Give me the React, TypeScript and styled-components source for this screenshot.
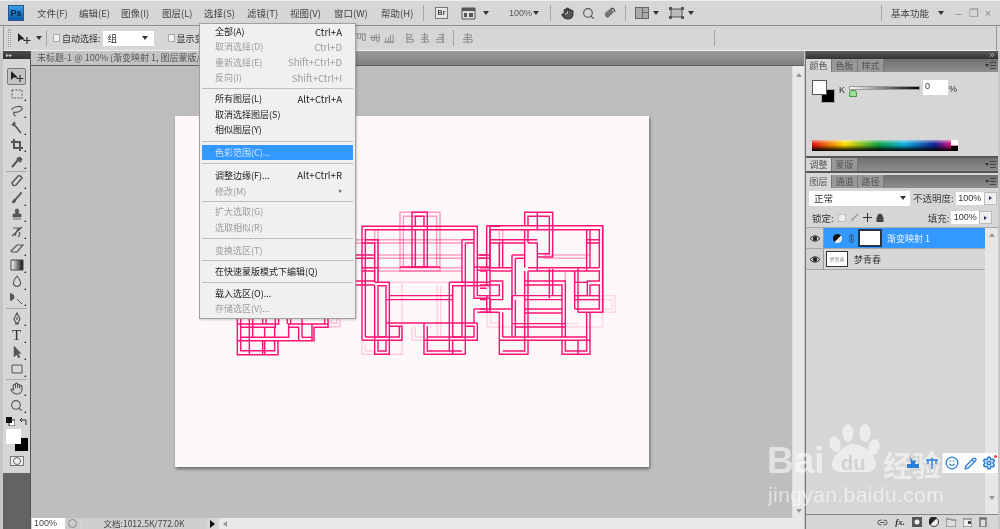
import React from 'react';
import styled, { createGlobalStyle } from 'styled-components';
import { Search, Smile, Pencil, Settings, Hand, Link2, ChevronsRight } from 'lucide-react';

const Global = createGlobalStyle`
  html, body { margin: 0; padding: 0; background: #d6d6d6; overflow: hidden; }
  * { box-sizing: border-box; }
`;

const Root = styled.div`
  position: relative;
  width: 1000px;
  height: 529px;
  overflow: hidden;
  background: #d6d6d6;
  display: flex;
  flex-direction: column;
  font-family: "Noto Sans CJK SC", "Liberation Sans", sans-serif;
  font-size: 9.5px;
  color: #333;
  filter: blur(0.35px);
`;

const MenuBar = styled.div`
  height: 26px;
  flex: none;
  display: flex;
  align-items: center;
  padding-left: 8px;
  border-top: 1px solid #eee;
  border-bottom: 1px solid #8e8e8e;
`;
const Logo = styled.div`
  width: 16px;
  height: 16px;
  margin-right: 13px;
  background: linear-gradient(#3aa0e8, #0a5aa8);
  border: 1px solid #27578a;
  color: #06223f;
  font: bold 9px/14px "Liberation Sans", sans-serif;
  text-align: center;
`;
const MenuItem = styled.span<{ $w: number }>`
  width: ${p => p.$w}px;
  flex: none;
  color: #444;
  white-space: nowrap;
`;
const VSep = styled.i<{ $ml: number; $mr: number }>`
  display: block;
  flex: none;
  width: 1px;
  height: 16px;
  background: #a8a8a8;
  margin: 0 ${p => p.$mr}px 0 ${p => p.$ml}px;
`;
const Caret = styled.i<{ $ml?: number; $mr?: number }>`
  display: block;
  flex: none;
  width: 0;
  height: 0;
  border: 3px solid transparent;
  border-top: 4px solid #333;
  border-bottom: 0;
  margin: 0 ${p => p.$mr ?? 0}px 0 ${p => p.$ml ?? 0}px;
`;
const BarIcon = styled.svg<{ $ml?: number }>`
  flex: none;
  margin-left: ${p => p.$ml ?? 0}px;
  color: #555;
`;
const BrBox = styled.div`
  width: 13px;
  height: 12px;
  border: 1px solid #777;
  background: #e6e6e6;
  color: #444;
  font: bold 7px/10px "Liberation Sans", sans-serif;
  text-align: center;
  flex: none;
`;
const Zoomed = styled.span`
  margin-left: 20px;
  width: 23px;
  flex: none;
  font: 9px "Liberation Sans", sans-serif;
  color: #555;
`;
const Spring = styled.div`
  flex: 1;
`;
const WinGlyph = styled.span<{ $w: number }>`
  width: ${p => p.$w}px;
  color: #8a8a8a;
  font: 11px "Liberation Sans", sans-serif;
  flex: none;
  text-align: center;
`;

const OptionsBar = styled.div`
  height: 25px;
  flex: none;
  display: flex;
  align-items: center;
  margin: 0 3px;
  padding-left: 4px;
  border-bottom: 1px solid #f0f0f0;
  border-left: 1px solid #999;
  border-right: 1px solid #999;
`;
const Grip = styled.div`
  width: 3px;
  height: 18px;
  flex: none;
  border-left: 1px dotted #999;
  border-right: 1px dotted #999;
  margin-right: 5px;
`;
const CheckBox = styled.i<{ $ml: number }>`
  display: block;
  flex: none;
  width: 7px;
  height: 8px;
  background: #f2f2f2;
  border: 1px solid #aaa;
  margin-left: ${p => p.$ml}px;
  margin-right: 2px;
`;
const OptLabel = styled.span`
  font-size: 9px;
  white-space: nowrap;
  flex: none;
`;
const OptClipped = styled(OptLabel)`
  width: 23px;
  overflow: hidden;
`;
const OptSelect = styled.div`
  width: 51px;
  height: 15px;
  margin-left: 2px;
  flex: none;
  background: #fff;
  display: flex;
  align-items: center;
  justify-content: space-between;
  padding: 0 6px 0 5px;
`;
const AlignGroup = styled.div<{ $ml: number }>`
  display: flex;
  gap: 2px;
  margin-left: ${p => p.$ml}px;
  flex: none;
`;
const AlignIcon = styled.svg`
  color: #8a8a8a;
`;

const Workspace = styled.div`
  flex: 1;
  min-height: 0;
  display: flex;
  padding: 0 3px;
  background: #c6c6c6;
`;
const Toolbox = styled.div`
  width: 28px;
  flex: none;
  background: #636363;
  border-right: 1px solid #555;
  display: flex;
  flex-direction: column;
`;
const ToolHead = styled.div`
  height: 8px;
  background: linear-gradient(#4c4c4c, #333);
  flex: none;
  color: #ccc;
  font-size: 6px;
  line-height: 8px;
  padding-left: 3px;
`;
const ToolBody = styled.div`
  height: 414px;
  flex: none;
  background: #d6d6d6;
  display: flex;
  flex-direction: column;
  align-items: center;
  padding-top: 9px;
`;
const ToolRow = styled.div<{ $sel?: boolean; $h?: number }>`
  position: relative;
  width: 19px;
  height: ${p => p.$h ?? 16.8}px;
  flex: none;
  display: flex;
  align-items: center;
  justify-content: center;
  color: #555;
  border: 1px solid ${p => (p.$sel ? '#777' : 'transparent')};
  border-radius: 2px;
  background: ${p => (p.$sel ? '#c4c4c4' : 'transparent')};
  &::after {
    content: '';
    position: absolute;
    right: -1px;
    bottom: 0;
    border: 1.5px solid transparent;
    border-right-color: #222;
    border-bottom-color: #222;
    display: ${p => (p.$sel ? 'none' : 'block')};
  }
`;
const ToolLetter = styled.span`
  font: 15px/15px "Liberation Serif", serif;
  color: #333;
`;
const ToolSep = styled.div`
  width: 21px;
  height: 1px;
  flex: none;
  background: #aaa;
  margin: 1px 0;
`;
const MiniColors = styled.div`
  width: 22px;
  height: 9px;
  margin-top: 3px;
  flex: none;
  display: flex;
  justify-content: space-between;
  align-items: center;
`;
const Swatches = styled.div`
  position: relative;
  width: 22px;
  height: 22px;
  margin-top: 3px;
  flex: none;
`;
const FgSwatch = styled.div`
  position: absolute;
  left: 0;
  top: 0;
  width: 15px;
  height: 15px;
  background: #fff;
  z-index: 1;
`;
const BgSwatch = styled.div`
  position: absolute;
  right: 0;
  bottom: 0;
  width: 13px;
  height: 13px;
  background: #000;
`;
const MaskBtn = styled.div`
  width: 14px;
  height: 10px;
  margin-top: 5px;
  background: #eee;
  border: 1px solid #777;
  display: flex;
  align-items: center;
  justify-content: center;
  flex: none;
  &::after {
    content: '';
    width: 6px;
    height: 6px;
    border-radius: 50%;
    border: 1px solid #666;
  }
`;

const DocColumn = styled.div`
  width: 773px;
  flex: none;
  display: flex;
  flex-direction: column;
`;
const TabBar = styled.div`
  height: 15px;
  flex: none;
  background: linear-gradient(#9a9a9a, #7f7f7f);
  border-bottom: 1px solid #5f5f5f;
`;
const DocTab = styled.div`
  width: 168px;
  height: 14px;
  background: #c4c4c4;
  color: #555;
  font-size: 9px;
  line-height: 13px;
  padding-left: 6px;
  white-space: nowrap;
  overflow: hidden;
`;
const DocMain = styled.div`
  flex: 1;
  min-height: 0;
  display: flex;
`;
const DocView = styled.div`
  flex: 1;
  background: #bebebe;
  padding: 50px 0 0 144px;
`;
const CanvasSheet = styled.div`
  width: 474px;
  height: 351px;
  background: #fff8f8;
  box-shadow: 1px 2px 3px rgba(0, 0, 0, .45);
`;
const Art = styled.svg`
  display: block;
`;
const VScroll = styled.div`
  width: 12px;
  flex: none;
  background: #e8e8e8;
  border-left: 1px solid #ddd;
  display: flex;
  flex-direction: column;
  justify-content: space-between;
  align-items: center;
  padding: 7px 0 5px;
`;
const ArrowUp = styled.i`
  border: 3px solid transparent;
  border-bottom: 4px solid #999;
  border-top: 0;
`;
const ArrowDown = styled.i`
  border: 3px solid transparent;
  border-top: 4px solid #999;
  border-bottom: 0;
`;
const StatusBar = styled.div`
  height: 11px;
  flex: none;
  display: flex;
  align-items: stretch;
  background: #d6d6d6;
  font-size: 9px;
  line-height: 11px;
`;
const ZoomBox = styled.div`
  width: 33px;
  margin-left: 1px;
  background: #fff;
  padding-left: 2px;
  font-family: "Liberation Sans", sans-serif;
  color: #444;
`;
const ClockBtn = styled.div`
  width: 15px;
  background: #ccc;
  display: flex;
  align-items: center;
  justify-content: center;
  &::after {
    content: '';
    width: 7px;
    height: 7px;
    border-radius: 50%;
    border: 1px solid #888;
  }
`;
const DocInfo = styled.div`
  width: 124px;
  margin-left: 2px;
  background: #cfcfcf;
  text-align: center;
  color: #444;
  white-space: nowrap;
  font-size: 8.5px;
`;
const PlayBtn = styled.div`
  width: 9px;
  margin-left: 2px;
  display: flex;
  align-items: center;
  justify-content: center;
  &::after {
    content: '';
    border: 4px solid transparent;
    border-left: 5px solid #111;
    border-right: 0;
  }
`;
const HScroll = styled.div`
  flex: 1;
  margin-left: 2px;
  background: #e8e8e8;
  display: flex;
  align-items: center;
  padding-left: 4px;
  &::before {
    content: '';
    border: 3px solid transparent;
    border-right: 4px solid #999;
    border-left: 0;
  }
`;

const Panels = styled.div`
  width: 193px;
  margin-left: 1px;
  flex: none;
  background: #d6d6d6;
  border-left: 1px solid #777;
  display: flex;
  flex-direction: column;
`;
const PanelHead = styled.div`
  height: 8px;
  flex: none;
  background: linear-gradient(#5a5a5a, #333);
  display: flex;
  justify-content: flex-end;
  color: #ddd;
  padding-right: 2px;
`;
const TabStrip = styled.div<{ $mt?: number }>`
  height: 13px;
  flex: none;
  margin-top: ${p => p.$mt ?? 0}px;
  background: linear-gradient(#707070, #8e8e8e);
  display: flex;
  align-items: stretch;
  position: relative;
`;
const PanelTab = styled.div<{ $on?: boolean }>`
  width: 26px;
  text-align: center;
  font-size: 9px;
  line-height: 13px;
  background: ${p => (p.$on ? '#d6d6d6' : '#999')};
  color: #555;
  border-right: 1px solid #777;
`;
const TabMenu = styled.div`
  margin-left: auto;
  margin-right: 2px;
  align-self: center;
  display: flex;
  align-items: center;
  gap: 1px;
  &::before {
    content: '';
    border: 2px solid transparent;
    border-top: 3px solid #333;
    border-bottom: 0;
  }
  &::after {
    content: '';
    width: 6px;
    height: 5px;
    border-top: 1px solid #444;
    border-bottom: 1px solid #444;
    background: linear-gradient(transparent 40%, #444 40%, #444 60%, transparent 60%);
  }
`;
const ColorBody = styled.div`
  height: 86px;
  flex: none;
  position: relative;
  border-bottom: 2px solid #555;
  padding: 8px 0 0 6px;
`;
const ColorTop = styled.div`
  display: flex;
  align-items: flex-start;
`;
const ColorSwatches = styled.div`
  position: relative;
  width: 23px;
  height: 23px;
  flex: none;
`;
const PanelFg = styled.div`
  position: absolute;
  left: 0;
  top: 0;
  width: 15px;
  height: 15px;
  background: #fff;
  border: 1px solid #555;
  z-index: 1;
`;
const PanelBg = styled.div`
  position: absolute;
  right: 0;
  bottom: 0;
  width: 14px;
  height: 14px;
  background: #000;
  border: 1px solid #aaa;
`;
const KLabel = styled.span`
  font: 9px/12px "Liberation Sans", sans-serif;
  color: #333;
  margin: 4px 0 0 4px;
  width: 10px;
  flex: none;
`;
const Slider = styled.div`
  position: relative;
  width: 71px;
  height: 4px;
  margin-top: 6px;
  flex: none;
  background: linear-gradient(to right, #fff, #000);
  border: 1px solid #999;
  &::after {
    content: '';
    position: absolute;
    left: -1px;
    top: 3px;
    width: 6px;
    height: 5px;
    background: #9fdc9f;
    border: 1px solid #3d9a3d;
    border-radius: 3px 3px 0 0;
  }
`;
const NumBox = styled.div`
  width: 25px;
  height: 15px;
  margin-left: 3px;
  flex: none;
  background: #fff;
  padding-left: 2px;
  font: 9px/12px "Liberation Sans", sans-serif;
`;
const Pct = styled.span`
  font: 9px/15px "Liberation Sans", sans-serif;
  margin: 2px 0 0 1px;
`;
const Ramp = styled.div`
  position: absolute;
  left: 6px;
  top: 68px;
  width: 146px;
  height: 11px;
  background:
    linear-gradient(to right, transparent 139px, #fff 139px) top / 100% 50% no-repeat,
    linear-gradient(to right, transparent 139px, #000 139px) bottom / 100% 50% no-repeat,
    linear-gradient(to bottom, rgba(255,255,255,.55), rgba(255,255,255,0) 35%, rgba(0,0,0,0) 45%, #000 100%),
    linear-gradient(to right, #e01010 0, #ffe000 33px, #10a040 66px, #10b0e0 92px, #102090 123px, #e01080 139px, #e01010 146px);
`;
const AdjGap = styled.div`
  height: 2px;
  flex: none;
  background: #555;
`;
const BlendRow = styled.div`
  height: 20px;
  flex: none;
  display: flex;
  align-items: center;
  padding-left: 3px;
`;
const BlendSelect = styled.div`
  width: 101px;
  height: 15px;
  background: #fff;
  display: flex;
  align-items: center;
  justify-content: space-between;
  padding: 0 4px 0 5px;
  flex: none;
  color: #333;
`;
const FieldLabel = styled.span<{ $ml: number }>`
  margin-left: ${p => p.$ml}px;
  color: #444;
  white-space: nowrap;
  flex: none;
`;
const FieldBox = styled.div`
  width: 28px;
  height: 13px;
  margin-left: 2px;
  background: #fff;
  flex: none;
  font: 9px/13px "Liberation Sans", sans-serif;
  text-align: center;
`;
const Stepper = styled.div`
  width: 13px;
  height: 13px;
  flex: none;
  background: #eee;
  border: 1px solid #bbb;
  color: #2860a8;
  display: flex;
  align-items: center;
  justify-content: center;
  &::after {
    content: '';
    border: 2px solid transparent;
    border-left: 3px solid #335;
    border-right: 0;
  }
`;
const LockRow = styled.div`
  height: 20px;
  flex: none;
  display: flex;
  align-items: center;
  padding-left: 6px;
  border-bottom: 1px solid #aaa;
`;
const LockIcons = styled.div`
  display: flex;
  gap: 4px;
  margin-left: 4px;
  width: 60px;
  flex: none;
  align-items: center;
`;
const LayersWrap = styled.div`
  flex: 1;
  min-height: 0;
  display: flex;
`;
const LayerList = styled.div`
  flex: 1;
  display: flex;
  flex-direction: column;
`;
const LayerRow = styled.div`
  height: 21px;
  flex: none;
  display: flex;
  align-items: center;
  border-bottom: 1px solid #a8a8a8;
`;
const EyeCell = styled.div`
  width: 18px;
  height: 100%;
  flex: none;
  background: #d0d0d0;
  border-right: 1px solid #999;
  display: flex;
  align-items: center;
  justify-content: center;
`;
const LayerBody = styled.div<{ $on?: boolean }>`
  flex: 1;
  height: 100%;
  display: flex;
  align-items: center;
  background: ${p => (p.$on ? '#3399ff' : 'transparent')};
  color: ${p => (p.$on ? '#eaf4ff' : '#333')};
`;
const AdjDot = styled.div`
  width: 9px;
  height: 9px;
  border-radius: 50%;
  background: linear-gradient(135deg, #111 50%, #eee 50%);
  margin-left: 9px;
  flex: none;
`;
const LinkWrap = styled.span`
  display: flex;
  margin-left: 5px;
  transform: rotate(90deg);
  color: #333;
`;
const Thumb = styled.div<{ $ml: number; $dark?: boolean }>`
  width: 22px;
  height: 16px;
  margin-left: ${p => p.$ml}px;
  flex: none;
  background: #fff;
  border: 1px solid #333;
  outline: ${p => (p.$dark ? '1px solid #1a3a5c' : 'none')};
  color: #888;
  font-size: 5px;
  line-height: 14px;
  text-align: center;
  overflow: hidden;
  white-space: nowrap;
`;
const LayerName = styled.span`
  margin-left: 6px;
  font-size: 9px;
  white-space: nowrap;
`;
const LayerScroll = styled.div`
  width: 13px;
  flex: none;
  background: #e6e6e6;
  display: flex;
  flex-direction: column;
  justify-content: space-between;
  align-items: center;
  padding: 5px 0 14px;
`;
const LayerFoot = styled.div`
  height: 15px;
  flex: none;
  border-top: 1px solid #888;
  display: flex;
  align-items: center;
  justify-content: flex-end;
  gap: 7px;
  padding-right: 11px;
  color: #444;
`;
const FxMark = styled.span`
  font: italic bold 9px "Liberation Serif", serif;
  color: #333;
`;

const MenuPanel = styled.div`
  position: absolute;
  left: 199px;
  top: 23px;
  width: 157px;
  height: 296px;
  background: #f0f0f0;
  border: 1px solid #a0a0a0;
  box-shadow: 1px 1px 2px rgba(0,0,0,.2);
  padding: 0 2px;
  z-index: 5;
`;
const DDRow = styled.div<{ $h: number; $off?: boolean; $hot?: boolean }>`
  height: ${p => p.$h}px;
  display: flex;
  align-items: center;
  justify-content: space-between;
  padding: 0 11px 0 13px;
  font-size: 9px;
  color: ${p => (p.$hot ? '#cfe6ff' : p.$off ? '#9c9c9c' : '#222')};
  background: ${p => (p.$hot ? '#3399ff' : 'transparent')};
  white-space: nowrap;
  position: relative;
`;
const Shortcut = styled.span`
  font-size: 9.6px;
`;
const DDSep = styled.div<{ $h: number }>`
  height: ${p => p.$h}px;
  display: flex;
  align-items: center;
  &::after {
    content: '';
    display: block;
    width: 100%;
    height: 1px;
    background: #bdbdbd;
  }
`;
const SubArrow = styled.i`
  border: 2.5px solid transparent;
  border-left: 3px solid #777;
  border-right: 0;
`;

const Watermark = styled.div`
  position: absolute;
  left: 766px;
  top: 420px;
  width: 190px;
  height: 90px;
  color: rgba(255, 255, 255, .55);
  z-index: 3;
`;
const WmBai = styled.span`
  position: absolute;
  left: 1px;
  top: 21px;
  font: bold 37px/40px "Liberation Sans", sans-serif;
`;
const WmDu = styled.span`
  position: absolute;
  left: 75px;
  top: 31px;
  font: bold 20px/24px "Liberation Sans", sans-serif;
  color: #d0d0d0;
`;
const WmCn = styled.span`
  position: absolute;
  left: 117px;
  top: 24px;
  font: bold 29px/40px "Noto Sans CJK SC", sans-serif;
  white-space: nowrap;
`;
const WmUrl = styled.span`
  position: absolute;
  left: 2px;
  top: 61px;
  font: 21px/28px "Liberation Sans", sans-serif;
  letter-spacing: 0.4px;
  white-space: nowrap;
`;
const WmPaw = styled.svg`
  position: absolute;
  left: 60px;
  top: 0;
`;
const FloatBar = styled.div`
  position: absolute;
  left: 906px;
  top: 453px;
  width: 92px;
  height: 20px;
  background: linear-gradient(to right, transparent 36px, rgba(255,255,255,.95) 37px);
  display: flex;
  align-items: center;
  justify-content: space-between;
  padding: 0 2px 0 0;
  color: #2a7fd6;
  z-index: 6;
`;
const FloatGear = styled.div`
  position: relative;
  display: flex;
  &::after {
    content: '';
    position: absolute;
    right: -1px;
    top: -1px;
    width: 3px;
    height: 3px;
    border-radius: 50%;
    background: #f33;
  }
`;

/* art: each group is in 3x-zoomed coordinates of its own crop */
const strong1 = [
  'M36 406V64H382V196H420', 'M46 396V74H372V186H420', 'M186 64V22H232V64', 'M196 64V34H222V64',
  'M186 64V186H232V64', 'M196 186V74M222 186V74', 'M150 186H270', 'M36 114H74V232', 'M46 104H84V232',
  'M36 198H74M36 188H82M16 150H74M16 160H74M16 228H74M16 240H74',
  'M74 232H118V448H74V240', 'M84 242H108V396H84Z', 'M84 408V438H108V408',
  'M118 272H308M110 284H308', 'M110 354H382', 'M120 364H148V396H46', 'M36 406H156V364H148',
  'M222 354V448H346', 'M232 364V438H336', 'M222 406H382V354', 'M232 396H372V364H346',
  'M298 232H346V448', 'M298 232V438', 'M308 242H336V396H308Z', 'M308 406V448',
  'M336 104H372', 'M346 114H372', 'M336 104V232H420', 'M346 114V232', 'M336 242H420',
  'M382 150H420M382 160H420', 'M372 186V280H420', 'M382 196V272H420', 'M372 312H420', 'M372 312V354', 'M382 322H420V64H450',
];
const pale1 = [
  'M150 22H270V198H150Z', 'M160 34H260V186H160Z', 'M16 104H336M16 114H336M84 150H336M84 160H336M84 188H336M84 198H336',
  'M74 76V232M84 76V232',
];
const faint1 = [
  'M36 408V448H156V232H118', 'M46 416V438H74', 'M262 232H298M262 242V396M272 242V396', 'M186 365V406H222M196 365V396H222', 'M160 232H262',
];
const strong2 = [
  'M0 150H20M0 160H20M0 188H20M0 198H20M0 240H20M0 250H20M0 284H20M0 312H20M0 322H58',
  'M20 62H368V322H294', 'M30 74H358V188', 'M20 62V188H96', 'M30 74V188', 'M134 62V22H218V62', 'M144 62V34H208V62', 'M172 22V74',
  'M208 62V146H172', 'M218 62V156H172', 'M30 104H172', 'M30 114H134', 'M144 114H172V198', 'M134 74V188', 'M144 74V114',
  'M58 114V188', 'M68 104V188', 'M96 150H134', 'M106 160H134', 'M96 150V272', 'M106 160V272',
  'M20 198V240H58V272H20V322', 'M30 198H96', 'M30 228H68V284H30V312H96V272H246', 'M58 322V448H144V406', 'M68 322V396',
  'M58 406H330', 'M68 396H320', 'M68 438H134V406', 'M246 406V448H330V322', 'M256 406V438H320V322', 'M294 406V448',
  'M134 228H256V396', 'M134 240H246V396', 'M134 284H246M134 312H246M134 324H246', 'M96 356H256M106 366H256', 'M96 272V396', 'M106 284V396',
  'M134 198V406', 'M144 198V396', 'M208 192V280', 'M218 192V272', 'M294 188V322', 'M284 198V312',
  'M144 188H358', 'M144 198H358V228H322V272H358V312H284', 'M368 322V62', 'M330 240H358V272H330Z', 'M284 232H322', 'M284 284H358', 'M284 272H322',
  'M330 74V188', 'M320 74V198', 'M320 104H358M320 114H358',
];
const pale2 = [
  'M58 74V188', 'M68 74V104', 'M190 150H330M190 160H320', 'M256 198V230M284 198V230',
];
const faint2 = [
  'M22 272V366H368V322', 'M32 282V354H58', 'M368 272H405V322H368', 'M330 284H395V312H368', 'M256 324V356H294',
];
const strong3 = [
  'M22 52V164H144V122', 'M32 52V152H134V122', 'M22 72H146V52', 'M32 82H136V52', 'M22 122H252V82H294V52',
  'M32 112H176V72H294', 'M58 52V164', 'M68 52V112', 'M104 82V112', 'M134 82V112', 'M98 52V72', 'M108 52V72',
  'M104 122V164', 'M98 122V164', 'M216 52V112', 'M246 72V122', 'M176 82H206V122', 'M182 52V72', 'M172 52V72', 'M216 112H246', 'M284 52V72',
];
const faint3 = ['M296 60V80H330V52', 'M304 60V70H320V52'];

const Strokes: React.FC<{ d: string[]; t: string; o: number }> = ({ d, t, o }) => (
  <g transform={t} fill="none" stroke="#ff1276" strokeWidth={4.3} strokeOpacity={o}>
    {d.map((x, i) => (
      <path key={i} d={x} />
    ))}
  </g>
);

const Artwork = () => (
  <Art width={474} height={351} viewBox="175 116 474 351">
    <Strokes d={faint1} t="translate(350 205) scale(.3333)" o={0.18} />
    <Strokes d={pale1} t="translate(350 205) scale(.3333)" o={0.4} />
    <Strokes d={faint2} t="translate(480 205) scale(.3333)" o={0.14} />
    <Strokes d={pale2} t="translate(480 205) scale(.3333)" o={0.35} />
    <Strokes d={faint3} t="translate(230 300) scale(.3333)" o={0.25} />
    <Strokes d={strong1} t="translate(350 205) scale(.3333)" o={1} />
    <Strokes d={strong2} t="translate(480 205) scale(.3333)" o={1} />
    <Strokes d={strong3} t="translate(230 300) scale(.3333)" o={1} />
  </Art>
);

const I: React.FC<{ d: string; fill?: boolean; w?: number; dash?: boolean }> = ({ d, fill, w = 1.2, dash }) => (
  <svg
    width={14}
    height={14}
    viewBox="0 0 14 14"
    fill={fill ? 'currentColor' : 'none'}
    stroke="currentColor"
    strokeWidth={w}
    strokeDasharray={dash ? '2 1.4' : undefined}
  >
    <path d={d} />
  </svg>
);

const MoveGlyph = () => (
  <svg width={15} height={13} viewBox="0 0 15 13">
    <path d="M2 1L2 10L4.5 7.5L9 7.5Z" fill="#222" />
    <path d="M11 5V12M7.5 8.5H14.5" stroke="#333" strokeWidth={1.2} />
  </svg>
);

const GradientGlyph = () => (
  <svg width={14} height={12} viewBox="0 0 14 12">
    <defs>
      <linearGradient id="gt">
        <stop offset="0" stopColor="#fff" />
        <stop offset="1" stopColor="#111" />
      </linearGradient>
    </defs>
    <path d="M1 1H13V11H1Z" fill="url(#gt)" stroke="#444" />
  </svg>
);

type ToolDef = string | { d: string; fill?: boolean; w?: number; dash?: boolean; h?: number };
const tools: ToolDef[] = [
  { d: 'M2 3H12V11H2Z', w: 1, dash: true, h: 17 },
  { d: 'M2 6C2 3 11 1 12 4C13 7 6 9 4 8M4 8C3 9 4 12 6 12', h: 17 },
  { d: 'M3 2L11 12M2 4L5 1M5 2L3 5', w: 1.6, h: 17 },
  { d: 'M4 1V10H13M1 4H10V13', w: 2, h: 17 },
  { d: 'M2 12L8 5M7 3L11 7M9 2L12 5', w: 2, h: 17 },
  '|',
  { d: 'M2 9L8 2Q11 1 12 4L6 11Q3 13 2 9Z', w: 1.4 },
  { d: 'M2 12Q3 8 5 8L11 1L12 2L6 9Q6 12 2 12Z', fill: true, w: 0.6 },
  { d: 'M7 1Q10 1 8 6H11V9H3V6H6Q4 1 7 1ZM3 11H11', fill: true, w: 0.8 },
  { d: 'M2 11L12 2M3 3H9Q6 6 5 11M9 7Q11 9 8 12', w: 1.2 },
  { d: 'M1 9L7 3H13L7 10H2Z', w: 1.2 },
  'G',
  { d: 'M7 1Q12 7 10 10Q7 13 4 10Q2 7 7 1Z', w: 1.1 },
  { d: 'M4 5A3.2 3.2 0 1 1 4 4.9ZM7 7L12 12', fill: true, w: 1 },
  '|',
  { d: 'M7 1L10 7L8 11H6L4 7ZM7 5V8M5 12H9', w: 1.2 },
  'T',
  { d: 'M4 1V12L6.5 9.5L8.5 13L10 12L8 8.5H11Z', fill: true, w: 0.5 },
  { d: 'M2 3H12V11H2Z', w: 1 },
  '|',
  'H',
  'Z',
];

const ddRows: ({ t: string; k?: string; off?: boolean; hot?: boolean; h: number; sub?: boolean } | number)[] = [
  { t: '全部(A)', k: 'Ctrl+A', h: 15.3 },
  { t: '取消选择(D)', k: 'Ctrl+D', off: true, h: 15.3 },
  { t: '重新选择(E)', k: 'Shift+Ctrl+D', off: true, h: 15.3 },
  { t: '反向(I)', k: 'Shift+Ctrl+I', off: true, h: 15.3 },
  6,
  { t: '所有图层(L)', k: 'Alt+Ctrl+A', h: 15.3 },
  { t: '取消选择图层(S)', h: 15.3 },
  { t: '相似图层(Y)', h: 15.3 },
  8,
  { t: '色彩范围(C)...', hot: true, h: 15 },
  7,
  { t: '调整边缘(F)...', k: 'Alt+Ctrl+R', h: 16 },
  { t: '修改(M)', off: true, sub: true, h: 16 },
  5,
  { t: '扩大选取(G)', off: true, h: 15.3 },
  { t: '选取相似(R)', off: true, h: 15.3 },
  8,
  { t: '变换选区(T)', off: true, h: 15.3 },
  6,
  { t: '在快速蒙版模式下编辑(Q)', h: 15.3 },
  6,
  { t: '载入选区(O)...', h: 15.6 },
  { t: '存储选区(V)...', off: true, h: 15.6 },
];

const Eye = () => (
  <svg width={12} height={9} viewBox="0 0 12 9">
    <path d="M1 4.5Q6 -1 11 4.5Q6 10 1 4.5Z" fill="#ddd" stroke="#222" />
    <circle cx={6} cy={4.5} r={2.2} fill="#222" />
  </svg>
);

const aligns = [
  ['M1 2H12M3 2V7H6V2M8 2V9H11V2', 'M1 6H12M3 3V9H6V3M8 2V10H11V2', 'M1 11H12M3 6V11H6V6M8 3V11H11V3'],
  ['M2 1V12M2 3H7V6H2M2 8H9V11H2', 'M6 1V12M3 3H9V6H3M2 8H10V11H2', 'M11 1V12M6 3H11V6H6M3 8H11V11H3'],
];

export default function App() {
  return (
    <Root>
      <Global />
      <MenuBar>
        <Logo>Ps</Logo>
        <MenuItem $w={42}>文件(F)</MenuItem>
        <MenuItem $w={42}>编辑(E)</MenuItem>
        <MenuItem $w={41}>图像(I)</MenuItem>
        <MenuItem $w={42}>图层(L)</MenuItem>
        <MenuItem $w={43}>选择(S)</MenuItem>
        <MenuItem $w={43}>滤镜(T)</MenuItem>
        <MenuItem $w={44}>视图(V)</MenuItem>
        <MenuItem $w={47}>窗口(W)</MenuItem>
        <MenuItem $w={42}>帮助(H)</MenuItem>
        <VSep $ml={0} $mr={11} />
        <BrBox>Br</BrBox>
        <BarIcon $ml={13} width={20} height={13} viewBox="0 0 20 13">
          <path d="M1 1H14V12H1Z" fill="#ddd" stroke="#555" />
          <path d="M1 1H14V4H1ZM3 6H6V10H3ZM8 6H12V10H8Z" fill="#555" />
        </BarIcon>
        <Caret $ml={2} />
        <Zoomed>100%</Zoomed>
        <Caret $ml={1} />
        <VSep $ml={11} $mr={10} />
        <Hand size={13} color="#333" fill="#555" />
        <BarIcon as={Search} $ml={8} size={13} />
        <BarIcon $ml={8} width={13} height={13} viewBox="0 0 13 13">
          <path d="M2 6L8 1L11 5L5 11Q1 10 2 6Z" fill="#777" />
          <path d="M8 1Q12 1 12 5" stroke="#333" fill="none" />
        </BarIcon>
        <VSep $ml={9} $mr={9} />
        <BarIcon width={14} height={12} viewBox="0 0 14 12">
          <path d="M0 0H14V12H0Z" fill="#666" />
          <path d="M1 1H7V11H1ZM8 1H13V5H8ZM8 6H13V11H8Z" fill="#aaa" />
        </BarIcon>
        <Caret $ml={4} />
        <BarIcon $ml={10} width={15} height={12} viewBox="0 0 15 12">
          <path d="M2 2H13V10H2Z" fill="#bbb" stroke="#555" />
          <path d="M0 0H3V3H0ZM12 0H15V3H12ZM0 9H3V12H0ZM12 9H15V12H12Z" fill="#555" />
        </BarIcon>
        <Caret $ml={4} />
        <Spring />
        <VSep $ml={0} $mr={9} />
        <MenuItem $w={47}>基本功能</MenuItem>
        <Caret $mr={6} />
        <WinGlyph $w={17}>–</WinGlyph>
        <WinGlyph $w={14}>❐</WinGlyph>
        <WinGlyph $w={14}>×</WinGlyph>
        <WinGlyph $w={5}> </WinGlyph>
      </MenuBar>

      <OptionsBar>
        <Grip />
        <MoveGlyph />
        <Caret $ml={5} />
        <VSep $ml={4} $mr={0} />
        <CheckBox $ml={6} />
        <OptLabel>自动选择:</OptLabel>
        <OptSelect>
          <span>组</span>
          <Caret />
        </OptSelect>
        <CheckBox $ml={14} />
        <OptClipped>显示变</OptClipped>
        <AlignGroup $ml={155}>
          {aligns[0].map((d, i) => (
            <AlignIcon key={i} width={12} height={12} viewBox="0 0 13 13" fill="none" stroke="currentColor">
              <path d={d} />
            </AlignIcon>
          ))}
        </AlignGroup>
        <AlignGroup $ml={10}>
          {aligns[1].map((d, i) => (
            <AlignIcon key={i} width={12} height={12} viewBox="0 0 13 13" fill="none" stroke="currentColor">
              <path d={d} />
            </AlignIcon>
          ))}
        </AlignGroup>
        <VSep $ml={8} $mr={8} />
        <AlignIcon width={12} height={12} viewBox="0 0 13 13" fill="none" stroke="currentColor">
          <path d="M6 1V12M2 3H10V6H2M1 8H11V11H1" />
        </AlignIcon>
        <VSep $ml={240} $mr={0} />
      </OptionsBar>

      <Workspace>
        <Toolbox>
          <ToolHead>▸▸</ToolHead>
          <ToolBody>
            <ToolRow $sel $h={17}>
              <MoveGlyph />
            </ToolRow>
            {tools.map((t, i) => {
              if (t === '|') return <ToolSep key={i} />;
              if (t === 'T')
                return (
                  <ToolRow key={i}>
                    <ToolLetter>T</ToolLetter>
                  </ToolRow>
                );
              if (t === 'G')
                return (
                  <ToolRow key={i}>
                    <GradientGlyph />
                  </ToolRow>
                );
              if (t === 'H')
                return (
                  <ToolRow key={i}>
                    <Hand size={13} />
                  </ToolRow>
                );
              if (t === 'Z')
                return (
                  <ToolRow key={i}>
                    <Search size={13} />
                  </ToolRow>
                );
              const o = t as Exclude<ToolDef, string>;
              return (
                <ToolRow key={i} $h={o.h}>
                  <I d={o.d} fill={o.fill} w={o.w} dash={o.dash} />
                </ToolRow>
              );
            })}
            <MiniColors>
              <svg width={9} height={9} viewBox="0 0 9 9">
                <path d="M3 3H9V9H3Z" fill="#fff" stroke="#333" />
                <path d="M0 0H6V6H0Z" fill="#111" />
              </svg>
              <svg width={9} height={9} viewBox="0 0 9 9" fill="none" stroke="#333">
                <path d="M1 3H7V8M1 3L3 1M1 3L3 5" />
              </svg>
            </MiniColors>
            <Swatches>
              <FgSwatch />
              <BgSwatch />
            </Swatches>
            <MaskBtn />
          </ToolBody>
        </Toolbox>

        <DocColumn>
          <TabBar>
            <DocTab>未标题-1 @ 100% (渐变映射 1, 图层蒙版/8)</DocTab>
          </TabBar>
          <DocMain>
            <DocView>
              <CanvasSheet>
                <Artwork />
              </CanvasSheet>
            </DocView>
            <VScroll>
              <ArrowUp />
              <ArrowDown />
            </VScroll>
          </DocMain>
          <StatusBar>
            <ZoomBox>100%</ZoomBox>
            <ClockBtn />
            <DocInfo>文档:1012.5K/772.0K</DocInfo>
            <PlayBtn />
            <HScroll />
          </StatusBar>
        </DocColumn>

        <Panels>
          <PanelHead>
            <ChevronsRight size={8} />
          </PanelHead>
          <TabStrip>
            <PanelTab $on>颜色</PanelTab>
            <PanelTab>色板</PanelTab>
            <PanelTab>样式</PanelTab>
            <TabMenu />
          </TabStrip>
          <ColorBody>
            <ColorTop>
              <ColorSwatches>
                <PanelFg />
                <PanelBg />
              </ColorSwatches>
              <KLabel>K</KLabel>
              <Slider />
              <NumBox>0</NumBox>
              <Pct>%</Pct>
            </ColorTop>
            <Ramp />
          </ColorBody>
          <TabStrip>
            <PanelTab $on>调整</PanelTab>
            <PanelTab>蒙版</PanelTab>
            <TabMenu />
          </TabStrip>
          <AdjGap />
          <TabStrip $mt={2}>
            <PanelTab $on>图层</PanelTab>
            <PanelTab>通道</PanelTab>
            <PanelTab>路径</PanelTab>
            <TabMenu />
          </TabStrip>
          <BlendRow>
            <BlendSelect>
              <span>正常</span>
              <Caret />
            </BlendSelect>
            <FieldLabel $ml={3}>不透明度:</FieldLabel>
            <FieldBox>100%</FieldBox>
            <Stepper />
          </BlendRow>
          <LockRow>
            <span>锁定:</span>
            <LockIcons>
              <svg width={8} height={8} viewBox="0 0 8 8">
                <path d="M0 0H8V8H0Z" fill="#eee" stroke="#999" />
              </svg>
              <svg width={9} height={9} viewBox="0 0 9 9" fill="none" stroke="#999" strokeWidth={1.5}>
                <path d="M1 8L8 1" />
              </svg>
              <svg width={9} height={9} viewBox="0 0 9 9" fill="none" stroke="#333">
                <path d="M4.5 0V9M0 4.5H9" />
              </svg>
              <svg width={8} height={9} viewBox="0 0 8 9">
                <path d="M1 4H7V9H1ZM2 4V2Q4 0 6 2V4" fill="#444" stroke="#444" />
              </svg>
            </LockIcons>
            <FieldLabel $ml={30}>填充:</FieldLabel>
            <FieldBox>100%</FieldBox>
            <Stepper />
          </LockRow>
          <LayersWrap>
            <LayerList>
              <LayerRow>
                <EyeCell>
                  <Eye />
                </EyeCell>
                <LayerBody $on>
                  <AdjDot />
                  <LinkWrap>
                    <Link2 size={9} />
                  </LinkWrap>
                  <Thumb $ml={3} $dark />
                  <LayerName>渐变映射 1</LayerName>
                </LayerBody>
              </LayerRow>
              <LayerRow>
                <EyeCell>
                  <Eye />
                </EyeCell>
                <LayerBody>
                  <Thumb $ml={2}>梦青春</Thumb>
                  <LayerName>梦青春</LayerName>
                </LayerBody>
              </LayerRow>
            </LayerList>
            <LayerScroll>
              <ArrowUp />
              <ArrowDown />
            </LayerScroll>
          </LayersWrap>
          <LayerFoot>
            <Link2 size={11} />
            <FxMark>fx.</FxMark>
            <svg width={10} height={10} viewBox="0 0 10 10">
              <path d="M0 0H10V10H0Z" fill="#555" />
              <circle cx={5} cy={5} r={2.5} fill="#eee" />
            </svg>
            <svg width={10} height={10} viewBox="0 0 10 10">
              <circle cx={5} cy={5} r={4.5} fill="#eee" stroke="#333" />
              <path d="M1 8L8 1A4.5 4.5 0 0 0 1 8Z" fill="#222" />
            </svg>
            <svg width={10} height={9} viewBox="0 0 10 9">
              <path d="M0 1H4L5 2H10V9H0Z" fill="#ddd" stroke="#666" />
            </svg>
            <svg width={9} height={9} viewBox="0 0 9 9">
              <path d="M0 1H9V9H0Z" fill="#eee" stroke="#666" />
              <path d="M5 3H8V6H5Z" fill="#444" />
            </svg>
            <svg width={8} height={10} viewBox="0 0 8 10">
              <path d="M1 2H7V10H1Z" fill="#ddd" stroke="#444" />
              <path d="M0 1H8" stroke="#444" />
            </svg>
          </LayerFoot>
        </Panels>
      </Workspace>

      <MenuPanel>
        {ddRows.map((r, i) =>
          typeof r === 'number' ? (
            <DDSep key={i} $h={r} />
          ) : (
            <DDRow key={i} $h={r.h} $off={r.off} $hot={r.hot}>
              <span>{r.t}</span>
              {r.k && <Shortcut>{r.k}</Shortcut>}
              {r.sub && <SubArrow />}
            </DDRow>
          ),
        )}
      </MenuPanel>

      <Watermark>
        <WmBai>Bai</WmBai>
        <WmPaw width={60} height={60} viewBox="0 0 60 60" fill="currentColor">
          <ellipse cx={9} cy={24} rx={5.5} ry={8} transform="rotate(-15 9 24)" />
          <ellipse cx={22} cy={13} rx={5.5} ry={9} />
          <ellipse cx={39} cy={13} rx={5.5} ry={9} />
          <ellipse cx={48} cy={27} rx={5.5} ry={8} transform="rotate(15 48 27)" />
          <path d="M28 24C38 24 52 38 50 46C48 54 38 52 28 52C18 52 8 54 6 46C4 38 18 24 28 24Z" />
        </WmPaw>
        <WmDu>du</WmDu>
        <WmCn>经验</WmCn>
        <WmUrl>jingyan.baidu.com</WmUrl>
      </Watermark>

      <FloatBar>
        <svg width={14} height={14} viewBox="0 0 14 14" fill="currentColor">
          <path d="M4 1L7 5L10 4L9 8H13V12H1V8H5Z" />
        </svg>
        <svg width={14} height={14} viewBox="0 0 14 14" fill="none" stroke="currentColor" strokeWidth={1.4}>
          <path d="M1 4H13M3 4V8M11 4V8M7 2V13" />
        </svg>
        <Smile size={14} strokeWidth={2.2} />
        <Pencil size={13} strokeWidth={2.4} />
        <FloatGear>
          <Settings size={14} strokeWidth={2.8} />
        </FloatGear>
      </FloatBar>
    </Root>
  );
}
